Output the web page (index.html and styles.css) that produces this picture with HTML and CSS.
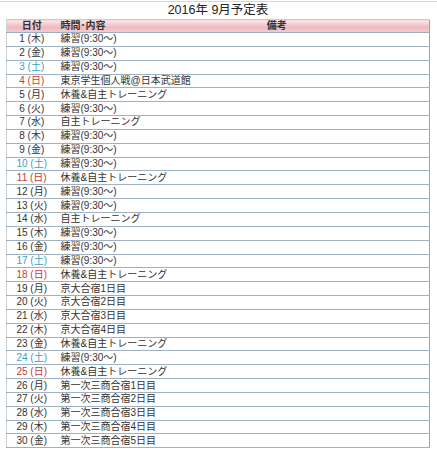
FILE: index.html
```html
<!DOCTYPE html>
<html lang="ja">
<head>
<meta charset="utf-8">
<link rel="stylesheet" href="styles.css">
</head>
<body>
<div class="page">
  <h1 class="title">2016年 9月予定表</h1>
  <table class="schedule">
    <colgroup><col class="c-date"><col class="c-item"><col class="c-note"></colgroup>
    <thead>
      <tr><th>日付</th><th class="left">時間･内容</th><th>備考</th></tr>
    </thead>
    <tbody>
      <tr><td class="d">1 (木)</td><td>練習(9:30～)</td><td></td></tr>
      <tr><td class="d">2 (金)</td><td>練習(9:30～)</td><td></td></tr>
      <tr><td class="d sat">3 (土)</td><td>練習(9:30～)</td><td></td></tr>
      <tr><td class="d sun">4 (日)</td><td>東京学生個人戦@日本武道館</td><td></td></tr>
      <tr><td class="d">5 (月)</td><td>休養&amp;自主トレーニング</td><td></td></tr>
      <tr><td class="d">6 (火)</td><td>練習(9:30～)</td><td></td></tr>
      <tr><td class="d">7 (水)</td><td>自主トレーニング</td><td></td></tr>
      <tr><td class="d">8 (木)</td><td>練習(9:30～)</td><td></td></tr>
      <tr><td class="d">9 (金)</td><td>練習(9:30～)</td><td></td></tr>
      <tr><td class="d sat">10 (土)</td><td>練習(9:30～)</td><td></td></tr>
      <tr><td class="d sun">11 (日)</td><td>休養&amp;自主トレーニング</td><td></td></tr>
      <tr><td class="d">12 (月)</td><td>練習(9:30～)</td><td></td></tr>
      <tr><td class="d">13 (火)</td><td>練習(9:30～)</td><td></td></tr>
      <tr><td class="d">14 (水)</td><td>自主トレーニング</td><td></td></tr>
      <tr><td class="d">15 (木)</td><td>練習(9:30～)</td><td></td></tr>
      <tr><td class="d">16 (金)</td><td>練習(9:30～)</td><td></td></tr>
      <tr><td class="d sat">17 (土)</td><td>練習(9:30～)</td><td></td></tr>
      <tr><td class="d sun">18 (日)</td><td>休養&amp;自主トレーニング</td><td></td></tr>
      <tr><td class="d">19 (月)</td><td>京大合宿1日目</td><td></td></tr>
      <tr><td class="d">20 (火)</td><td>京大合宿2日目</td><td></td></tr>
      <tr><td class="d">21 (水)</td><td>京大合宿3日目</td><td></td></tr>
      <tr><td class="d">22 (木)</td><td>京大合宿4日目</td><td></td></tr>
      <tr><td class="d">23 (金)</td><td>休養&amp;自主トレーニング</td><td></td></tr>
      <tr><td class="d sat">24 (土)</td><td>練習(9:30～)</td><td></td></tr>
      <tr><td class="d sun">25 (日)</td><td>休養&amp;自主トレーニング</td><td></td></tr>
      <tr><td class="d">26 (月)</td><td>第一次三商合宿1日目</td><td></td></tr>
      <tr><td class="d">27 (火)</td><td>第一次三商合宿2日目</td><td></td></tr>
      <tr><td class="d">28 (水)</td><td>第一次三商合宿3日目</td><td></td></tr>
      <tr><td class="d">29 (木)</td><td>第一次三商合宿4日目</td><td></td></tr>
      <tr><td class="d">30 (金)</td><td>第一次三商合宿5日目</td><td></td></tr>
    </tbody>
  </table>
</div>
</body>
</html>
```

FILE: styles.css
```css
html, body {
  margin: 0;
  padding: 0;
  background: #ffffff;
}
body {
  font-family: "Liberation Sans", "Noto Sans CJK JP", sans-serif;
  color: #333333;
}
.page {
  border-top: 1px solid #d6d6d6;
  margin-top: 1px;
  padding: 0 7px 0 6px;
}
.title {
  margin: 0;
  height: 17px;
  line-height: 17px;
  font-size: 12.5px;
  font-weight: normal;
  text-align: center;
  color: #222222;
}
.schedule {
  width: 100%;
  border-collapse: collapse;
  table-layout: fixed;
  font-size: 10px;
  border-left: 1px solid #c9d3dc;
  border-right: 1px solid #8ea3b3;
}
.c-date { width: 50px; }
.c-item { width: 68px; }
.schedule th {
  height: 12px;
  padding: 0;
  line-height: 12px;
  font-size: 10px;
  font-weight: bold;
  color: #333333;
  text-align: center;
  background: linear-gradient(to bottom, #fbeaec 0%, #eeb9c0 55%, #f3ccd1 100%);
  border-top: 1px solid #c6cfd8;
  border-bottom: 1px solid #9aaebd;
}
.schedule th.left {
  text-align: left;
  padding-left: 4px;
}
.schedule td {
  height: 12.85px;
  padding: 0;
  line-height: 12px;
  white-space: nowrap;
  overflow: visible;
  border-bottom: 1px solid #9fb2c1;
}
.schedule td:nth-child(2) {
  padding-left: 4px;
}
.schedule td.d {
  text-align: center;
}
.sat { color: #3aa0c8; }
.sun { color: #c83a3a; }
```
